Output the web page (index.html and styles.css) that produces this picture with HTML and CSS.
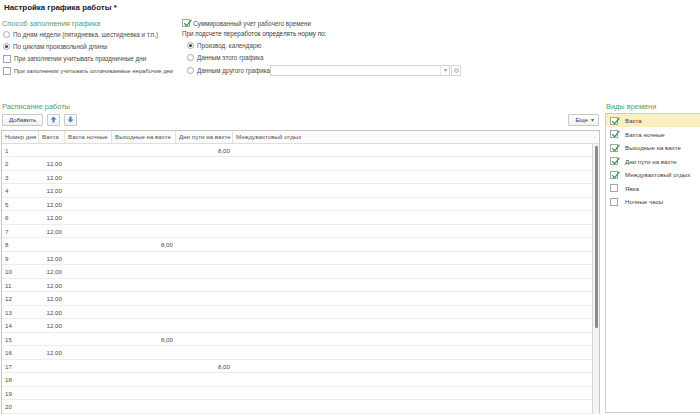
FILE: index.html
```html
<!DOCTYPE html>
<html lang="ru">
<head>
<meta charset="utf-8">
<title>Настройка графика работы</title>
<link rel="stylesheet" href="styles.css">
</head>
<body>
<div class="page">
  <h1 class="title">Настройка графика работы *</h1>

  <div class="settings">
    <div class="col-left">
      <div class="group-label">Способ заполнения графика</div>
      <div class="opt"><span class="radio"></span>По дням недели (пятидневка, шестидневка и т.п.)</div>
      <div class="opt"><span class="radio on"></span>По циклам произвольной длины</div>
      <div class="opt"><span class="check"></span>При заполнении учитывать праздничные дни</div>
      <div class="opt opt-narrow"><span class="check"></span>При заполнении учитывать оплачиваемые нерабочие дни</div>
    </div>
    <div class="col-right">
      <div class="opt opt-top"><span class="check"><svg viewBox="0 0 9 9"><path d="M1.6 4.6 L3.6 6.8 L8.2 1.2" /></svg></span>Суммированный учет рабочего времени</div>
      <div class="caption">При подсчете переработок определять норму по:</div>
      <div class="sub">
        <div class="opt"><span class="radio on"></span>Производ. календарю</div>
        <div class="opt"><span class="radio"></span>Данным этого графика</div>
        <div class="opt opt-field"><span class="radio"></span><span class="opt-text">Данным другого графика</span>
          <span class="field"><span class="field-input"></span><span class="field-drop">▾</span></span>
          <span class="field-btn"><span class="dot"></span></span>
        </div>
      </div>
    </div>
  </div>

  <div class="lower">
    <div class="schedule">
      <div class="group-label group-label-low">Расписание работы</div>
      <div class="toolbar">
        <div class="btn btn-text">Добавить</div>
        <div class="btn btn-icon"><svg viewBox="0 0 8 8"><path d="M4 0.5 L7.5 4 L5.2 4 L5.2 7.5 L2.8 7.5 L2.8 4 L0.5 4 Z"/></svg></div>
        <div class="btn btn-icon"><svg viewBox="0 0 8 8"><path d="M4 7.5 L7.5 4 L5.2 4 L5.2 0.5 L2.8 0.5 L2.8 4 L0.5 4 Z"/></svg></div>
        <div class="spacer"></div>
        <div class="btn btn-text btn-more">Еще <span class="caret">▾</span></div>
      </div>
      <div class="grid">
        <div class="grid-head">
          <div class="hcell">Номер дня</div>
          <div class="hcell">Вахта</div>
          <div class="hcell">Вахта ночные</div>
          <div class="hcell">Выходные на вахте</div>
          <div class="hcell">Дни пути на вахте</div>
          <div class="hcell hcell-last">Междувахтовый отдых<span class="sort">-</span></div>
        </div>
        <div class="grid-body">
          <div class="rows">
            <div class="row"><div class="c">1</div><div class="c n"></div><div class="c n"></div><div class="c n"></div><div class="c n">8,00</div><div class="c"></div></div>
            <div class="row"><div class="c">2</div><div class="c n">12,00</div><div class="c n"></div><div class="c n"></div><div class="c n"></div><div class="c"></div></div>
            <div class="row"><div class="c">3</div><div class="c n">12,00</div><div class="c n"></div><div class="c n"></div><div class="c n"></div><div class="c"></div></div>
            <div class="row"><div class="c">4</div><div class="c n">12,00</div><div class="c n"></div><div class="c n"></div><div class="c n"></div><div class="c"></div></div>
            <div class="row"><div class="c">5</div><div class="c n">12,00</div><div class="c n"></div><div class="c n"></div><div class="c n"></div><div class="c"></div></div>
            <div class="row"><div class="c">6</div><div class="c n">12,00</div><div class="c n"></div><div class="c n"></div><div class="c n"></div><div class="c"></div></div>
            <div class="row"><div class="c">7</div><div class="c n">12,00</div><div class="c n"></div><div class="c n"></div><div class="c n"></div><div class="c"></div></div>
            <div class="row"><div class="c">8</div><div class="c n"></div><div class="c n"></div><div class="c n">8,00</div><div class="c n"></div><div class="c"></div></div>
            <div class="row"><div class="c">9</div><div class="c n">12,00</div><div class="c n"></div><div class="c n"></div><div class="c n"></div><div class="c"></div></div>
            <div class="row"><div class="c">10</div><div class="c n">12,00</div><div class="c n"></div><div class="c n"></div><div class="c n"></div><div class="c"></div></div>
            <div class="row"><div class="c">11</div><div class="c n">12,00</div><div class="c n"></div><div class="c n"></div><div class="c n"></div><div class="c"></div></div>
            <div class="row"><div class="c">12</div><div class="c n">12,00</div><div class="c n"></div><div class="c n"></div><div class="c n"></div><div class="c"></div></div>
            <div class="row"><div class="c">13</div><div class="c n">12,00</div><div class="c n"></div><div class="c n"></div><div class="c n"></div><div class="c"></div></div>
            <div class="row"><div class="c">14</div><div class="c n">12,00</div><div class="c n"></div><div class="c n"></div><div class="c n"></div><div class="c"></div></div>
            <div class="row"><div class="c">15</div><div class="c n"></div><div class="c n"></div><div class="c n">8,00</div><div class="c n"></div><div class="c"></div></div>
            <div class="row"><div class="c">16</div><div class="c n">12,00</div><div class="c n"></div><div class="c n"></div><div class="c n"></div><div class="c"></div></div>
            <div class="row"><div class="c">17</div><div class="c n"></div><div class="c n"></div><div class="c n"></div><div class="c n">8,00</div><div class="c"></div></div>
            <div class="row"><div class="c">18</div><div class="c n"></div><div class="c n"></div><div class="c n"></div><div class="c n"></div><div class="c"></div></div>
            <div class="row"><div class="c">19</div><div class="c n"></div><div class="c n"></div><div class="c n"></div><div class="c n"></div><div class="c"></div></div>
            <div class="row"><div class="c">20</div><div class="c n"></div><div class="c n"></div><div class="c n"></div><div class="c n"></div><div class="c"></div></div>
            <div class="row"><div class="c"></div><div class="c n"></div><div class="c n"></div><div class="c n"></div><div class="c n"></div><div class="c"></div></div>
          </div>
          <div class="scrollbar"><div class="thumb"></div></div>
        </div>
      </div>
    </div>

    <div class="kinds">
      <div class="group-label group-label-low">Виды времени</div>
      <div class="kinds-list">
        <div class="kind kind-active"><span class="check"><svg viewBox="0 0 9 9"><path d="M1.6 4.6 L3.6 6.8 L8.2 1.2" /></svg></span>Вахта</div>
        <div class="kind"><span class="check"><svg viewBox="0 0 9 9"><path d="M1.6 4.6 L3.6 6.8 L8.2 1.2" /></svg></span>Вахта ночные</div>
        <div class="kind"><span class="check"><svg viewBox="0 0 9 9"><path d="M1.6 4.6 L3.6 6.8 L8.2 1.2" /></svg></span>Выходные на вахте</div>
        <div class="kind"><span class="check"><svg viewBox="0 0 9 9"><path d="M1.6 4.6 L3.6 6.8 L8.2 1.2" /></svg></span>Дни пути на вахте</div>
        <div class="kind"><span class="check"><svg viewBox="0 0 9 9"><path d="M1.6 4.6 L3.6 6.8 L8.2 1.2" /></svg></span>Междувахтовый отдых</div>
        <div class="kind"><span class="check"></span>Явка</div>
        <div class="kind"><span class="check"></span>Ночные часы</div>
      </div>
    </div>
  </div>
</div>
</body>
</html>
```

FILE: styles.css
```css
* { box-sizing: border-box; }
html, body { margin: 0; padding: 0; background: #ffffff; }
body {
  width: 700px;
  height: 414px;
  overflow: hidden;
  font-family: "Liberation Sans", Arial, sans-serif;
  font-size: 6.2px;
  color: #4a4a4a;
}
.page { padding-left: 1px; }

.title {
  margin: 0;
  padding: 2px 0 0 3px;
  height: 19px;
  font-size: 7.9px;
  line-height: 12px;
  font-weight: bold;
  color: #1a1a1a;
}

.settings { display: flex; font-size: 6.3px; }
.col-left { width: 179px; }
.col-right { flex: 1; }

.group-label {
  color: #4f9d6d;
  font-size: 7.4px;
  line-height: 10px;
  height: 9px;
  padding-left: 1px;
  white-space: nowrap;
}

.opt {
  display: flex;
  align-items: center;
  height: 12.3px;
  gap: 3px;
  padding-left: 2px;
  white-space: nowrap;
}
.opt-narrow { font-size: 5.9px; }
.opt-top { margin-top: -2px; }

.radio {
  width: 7px;
  height: 7px;
  border: 1px solid #a8a8a8;
  border-radius: 50%;
  background: #fff;
  display: flex;
  align-items: center;
  justify-content: center;
  flex: none;
}
.radio.on::after {
  content: "";
  width: 3px;
  height: 3px;
  border-radius: 50%;
  background: #3c3c3c;
}

.check {
  width: 8px;
  height: 8px;
  border: 1px solid #a6a6a6;
  background: #fff;
  flex: none;
  position: relative;
}
.check svg {
  position: absolute;
  left: 0;
  top: -1px;
  width: 9px;
  height: 9px;
  overflow: visible;
}
.check path {
  fill: none;
  stroke: #2f9a45;
  stroke-width: 1.3;
  stroke-linecap: round;
  stroke-linejoin: round;
}

.caption {
  height: 10px;
  line-height: 10px;
  padding-left: 2px;
  color: #3a3a3a;
}
.sub { padding-left: 5px; }

.opt-field { height: 14px; }
.opt-text { width: 70px; }
.field {
  display: flex;
  width: 180px;
  height: 11px;
  border: 1px solid #d2d2d2;
  background: #fff;
}
.field-input { flex: 1; }
.field-drop {
  width: 9px;
  border-left: 1px solid #e6e6e6;
  color: #9a9a9a;
  font-size: 6px;
  line-height: 9px;
  text-align: center;
}
.field-btn {
  width: 10px;
  height: 11px;
  border: 1px solid #d8d8d8;
  margin-left: -2px;
  display: flex;
  align-items: center;
  justify-content: center;
}
.dot {
  width: 5px;
  height: 5px;
  border-radius: 50%;
  border: 1px solid #b8b8b8;
  background: #e6e6e6;
}

.lower {
  display: flex;
  gap: 5px;
  margin-top: 23px;
}
.schedule { width: 599px; }
.kinds { flex: 1; }
.group-label-low { height: 12px; line-height: 11px; }

.toolbar {
  display: flex;
  align-items: center;
  gap: 4px;
  height: 14px;
  padding-left: 1px;
}
.spacer { flex: 1; }
.btn {
  height: 12px;
  border: 1px solid #c9c9c9;
  border-radius: 1px;
  background: linear-gradient(#ffffff, #f1f1f1);
  display: flex;
  align-items: center;
  justify-content: center;
  color: #3d3d3d;
}
.btn-text { padding: 0 6px; }
.btn-icon { width: 13px; }
.btn-icon svg { width: 7px; height: 7px; }
.btn-icon path { fill: #4d84c6; }
.btn-more { padding: 0 4px 0 6px; margin-right: 1px; }
.caret { font-size: 6px; margin-left: 3px; color: #666; }

.grid {
  margin-top: 3px;
  border: 1px solid #c6c6c6;
  height: 300px;
  overflow: hidden;
}
.grid-head {
  display: grid;
  grid-template-columns: 37px 26px 47px 64px 57px 1fr;
  height: 13px;
  border-bottom: 1px solid #dedede;
  background: #fbfbfb;
  color: #555;
}
.hcell {
  padding-left: 3px;
  line-height: 12px;
  border-right: 1px solid #e2e2e2;
  white-space: nowrap;
  overflow: hidden;
}
.hcell-last { border-right: none; display: flex; justify-content: space-between; padding-right: 3px; }
.sort { color: #999; }

.grid-body { display: flex; }
.rows { flex: 1; }
.row {
  display: grid;
  grid-template-columns: 37px 26px 47px 64px 57px 1fr;
  height: 13.5px;
  border-bottom: 1px solid #ececec;
}
.c {
  line-height: 13px;
  padding-left: 3px;
  color: #4a4a4a;
  white-space: nowrap;
}
.c.n { text-align: right; padding: 0 3px 0 0; }

.scrollbar {
  width: 7px;
  border-left: 1px solid #d6d6d6;
  background: #f4f4f4;
  padding: 2px 1px 0 1px;
  height: 290px;
}
.thumb {
  width: 3px;
  margin: 0 auto;
  height: 182px;
  background: #8c8c8c;
  border-radius: 1px;
}

.kinds-list {
  border: 1px solid #cdcdcd;
  border-right: none;
  height: 300px;
}
.kind {
  display: flex;
  align-items: center;
  gap: 7px;
  height: 13.5px;
  padding-left: 4px;
  white-space: nowrap;
  color: #444;
}
.kind-active {
  background: #fbefc2;
}
```
